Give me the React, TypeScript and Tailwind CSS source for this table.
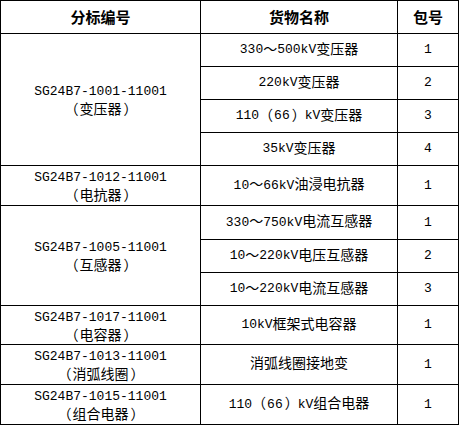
import React from "react";

type Row = { name: string; pkg: string };
type Group = { code: string; label: string; rows: Row[] };

const groups: Group[] = [
  {
    code: "SG24B7-1001-11001",
    label: "（变压器）",
    rows: [
      { name: "330～500kV变压器", pkg: "1" },
      { name: "220kV变压器", pkg: "2" },
      { name: "110（66）kV变压器", pkg: "3" },
      { name: "35kV变压器", pkg: "4" },
    ],
  },
  {
    code: "SG24B7-1012-11001",
    label: "（电抗器）",
    rows: [{ name: "10～66kV油浸电抗器", pkg: "1" }],
  },
  {
    code: "SG24B7-1005-11001",
    label: "（互感器）",
    rows: [
      { name: "330～750kV电流互感器", pkg: "1" },
      { name: "10～220kV电压互感器", pkg: "2" },
      { name: "10～220kV电流互感器", pkg: "3" },
    ],
  },
  {
    code: "SG24B7-1017-11001",
    label: "（电容器）",
    rows: [{ name: "10kV框架式电容器", pkg: "1" }],
  },
  {
    code: "SG24B7-1013-11001",
    label: "（消弧线圈）",
    rows: [{ name: "消弧线圈接地变", pkg: "1" }],
  },
  {
    code: "SG24B7-1015-11001",
    label: "（组合电器）",
    rows: [{ name: "110（66）kV组合电器", pkg: "1" }],
  },
];

function Mixed({ text }: { text: string }) {
  const parts = text.match(/[\u0000-\u00ff]+|（|）|[^\u0000-\u00ff（）]+/g) || [];
  return (
    <>
      {parts.map((p, i) => {
        if (/^[\u0000-\u00ff]+$/.test(p))
          return (
            <span key={i} className="text-[13px]">
              {p}
            </span>
          );
        if (p === "（")
          return (
            <span key={i} className="inline-block w-[15px] pr-[2px] text-right text-[14px]">
              {p}
            </span>
          );
        if (p === "）")
          return (
            <span key={i} className="inline-block w-[15px] pl-[2px] text-left text-[14px]">
              {p}
            </span>
          );
        return (
          <span key={i} className="text-[14px]">
            {p}
          </span>
        );
      })}
    </>
  );
}

const cell =
  "border-r border-b border-black flex items-center justify-center text-center text-black";

export default function App() {
  return (
    <div className="w-[459px] h-[425px] bg-white">
      <div
        className="grid grid-cols-[200px_197px_61px] grid-rows-[33px_33px_33px_33px_33px_40px_34px_33px_33px_39px_40px_40px] border-l border-t border-black w-[459px]"
        style={{ fontFamily: '"Liberation Mono", "Noto Sans CJK SC", monospace' }}
      >
        <div className={`${cell} font-bold text-[15px] [font-family:'Noto_Sans_CJK_SC',sans-serif]`}>
          分标编号
        </div>
        <div className={`${cell} font-bold text-[15px] [font-family:'Noto_Sans_CJK_SC',sans-serif]`}>
          货物名称
        </div>
        <div className={`${cell} font-bold text-[15px] [font-family:'Noto_Sans_CJK_SC',sans-serif]`}>
          包号
        </div>
        {groups.map((g, gi) => (
          <React.Fragment key={gi}>
            <div
              className={`${cell} flex-col leading-[19px] pt-[3px] ${
                g.rows.length === 4
                  ? "row-span-4"
                  : g.rows.length === 3
                  ? "row-span-3"
                  : "row-span-1"
              }`}
            >
              <div>
                <Mixed text={g.code} />
              </div>
              <div>
                <Mixed text={g.label} />
              </div>
            </div>
            {g.rows.map((r, ri) => (
              <React.Fragment key={ri}>
                <div className={`${cell} whitespace-nowrap`}>
                  <Mixed text={r.name} />
                </div>
                <div className={cell}>
                  <Mixed text={r.pkg} />
                </div>
              </React.Fragment>
            ))}
          </React.Fragment>
        ))}
      </div>
    </div>
  );
}
